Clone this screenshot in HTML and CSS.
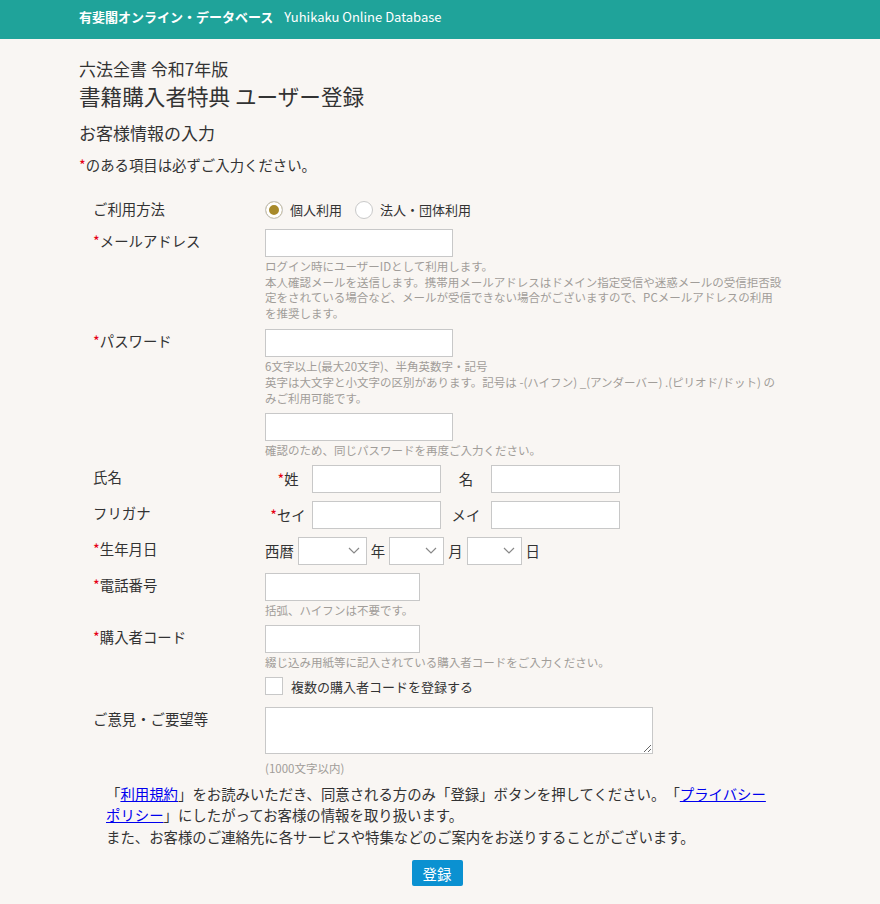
FILE: index.html
```html
<!DOCTYPE html>
<html lang="ja">
<head>
<meta charset="utf-8">
<title>書籍購入者特典 ユーザー登録</title>
<link rel="stylesheet" href="styles.css">
</head>
<body>
<header class="topbar">
  <div class="topbar-inner">
    <span class="brand">有斐閣オンライン・データベース</span>
    <span class="brand-en">Yuhikaku Online Database</span>
  </div>
</header>
<main class="page">
  <p class="subtitle">六法全書 令和7年版</p>
  <h1 class="title">書籍購入者特典 ユーザー登録</h1>
  <h2 class="section">お客様情報の入力</h2>
  <p class="note"><span class="req">*</span>のある項目は必ずご入力ください。</p>

  <form class="form">
    <div class="row row-first">
      <div class="label">ご利用方法</div>
      <div class="radios">
        <label class="opt"><input class="radio" type="radio" name="usage" checked><span>個人利用</span></label>
        <label class="opt opt-2"><input class="radio" type="radio" name="usage"><span>法人・団体利用</span></label>
      </div>
    </div>

    <div class="row row-email">
      <div class="label"><span class="req">*</span>メールアドレス</div>
      <div class="field">
        <input class="text w-188" type="text">
        <p class="help">ログイン時にユーザーIDとして利用します。<br>本人確認メールを送信します。携帯用メールアドレスはドメイン指定受信や迷惑メールの受信拒否設<br>定をされている場合など、メールが受信できない場合がございますので、PCメールアドレスの利用<br>を推奨します。</p>
      </div>
    </div>

    <div class="row row-pass">
      <div class="label"><span class="req">*</span>パスワード</div>
      <div class="field">
        <input class="text w-188" type="password">
        <p class="help">6文字以上(最大20文字)、半角英数字・記号<br>英字は大文字と小文字の区別があります。記号は -(ハイフン) _(アンダーバー) .(ピリオド/ドット) の<br>みご利用可能です。</p>
        <input class="text w-188 confirm" type="password">
        <p class="help">確認のため、同じパスワードを再度ご入力ください。</p>
      </div>
    </div>

    <div class="row row-name">
      <div class="label">氏名</div>
      <div class="pair">
        <span class="sub sub-1"><span class="req">*</span>姓</span>
        <input class="text w-129" type="text">
        <span class="sub sub-2">名</span>
        <input class="text w-129" type="text">
      </div>
    </div>

    <div class="row row-kana">
      <div class="label">フリガナ</div>
      <div class="pair">
        <span class="sub sub-1"><span class="req">*</span>セイ</span>
        <input class="text w-129" type="text">
        <span class="sub sub-2">メイ</span>
        <input class="text w-129" type="text">
      </div>
    </div>

    <div class="row row-birth">
      <div class="label"><span class="req">*</span>生年月日</div>
      <div class="birth">
        <span>西暦</span>
        <select class="sel sel-year"><option></option></select>
        <span>年</span>
        <select class="sel sel-md"><option></option></select>
        <span>月</span>
        <select class="sel sel-md"><option></option></select>
        <span>日</span>
      </div>
    </div>

    <div class="row row-tel">
      <div class="label"><span class="req">*</span>電話番号</div>
      <div class="field">
        <input class="text w-155" type="text">
        <p class="help">括弧、ハイフンは不要です。</p>
      </div>
    </div>

    <div class="row row-code">
      <div class="label"><span class="req">*</span>購入者コード</div>
      <div class="field">
        <input class="text w-155" type="text">
        <p class="help">綴じ込み用紙等に記入されている購入者コードをご入力ください。</p>
        <label class="check-row"><input class="check" type="checkbox"><span>複数の購入者コードを登録する</span></label>
      </div>
    </div>

    <div class="row row-opinion">
      <div class="label">ご意見・ご要望等</div>
      <div class="field">
        <textarea class="area"></textarea>
        <p class="help help-area">(1000文字以内)</p>
      </div>
    </div>

    <p class="consent">「<a href="#">利用規約</a>」をお読みいただき、同意される方のみ「登録」ボタンを押してください。「<a href="#">プライバシー<br>ポリシー</a>」にしたがってお客様の情報を取り扱います。<br>また、お客様のご連絡先に各サービスや特集などのご案内をお送りすることがございます。</p>

    <div class="actions">
      <button class="submit" type="button">登録</button>
    </div>
  </form>
</main>
</body>
</html>
```

FILE: styles.css
```css
* {
  box-sizing: border-box;
}

body {
  margin: 0;
  background: #f9f6f3;
  color: #333;
  font-family: "Noto Sans CJK JP", "Noto Sans", sans-serif;
  font-size: 14.4px;
  text-spacing-trim: space-all;
}

.topbar {
  background: #1fa39a;
  height: 39px;
}

.topbar-inner {
  width: 722px;
  margin: 0 auto;
  padding-top: 7px;
  display: flex;
  gap: 11px;
  color: #fff;
  font-size: 13px;
  line-height: 20px;
}

.brand {
  font-weight: 700;
}

.page {
  width: 722px;
  margin: 0 auto;
  padding-top: 17px;
  padding-bottom: 6px;
}

.subtitle {
  margin: 0;
  font-size: 17px;
  line-height: 25px;
}

.title {
  margin: 0;
  font-size: 21.6px;
  line-height: 30px;
  font-weight: 400;
}

.section {
  margin: 10px 0 0;
  font-size: 17px;
  line-height: 24px;
  font-weight: 400;
}

.note {
  margin: 10px 0 0;
  line-height: 20px;
}

.req {
  color: #e60012;
}

.form {
  padding-left: 14px;
  margin: 22px 0 0;
}

.row {
  display: flex;
  align-items: flex-start;
  margin-top: 8px;
}

.row-first {
  margin-top: 0;
}

.row-email {
  margin-top: 9px;
}

.row-pass {
  margin-top: 8px;
}

.row-name {
  margin-top: 6px;
}

.row-code {
  margin-top: 7px;
}

.row-opinion {
  margin-top: 11px;
}

.label {
  width: 172px;
  flex: none;
  line-height: 23px;
}

.radios {
  display: flex;
  align-items: center;
  height: 23px;
  padding-top: 2px;
}

.opt {
  display: flex;
  align-items: center;
  font-size: 13px;
}

.opt-2 {
  margin-left: 13px;
}

.radio {
  appearance: none;
  -webkit-appearance: none;
  width: 18px;
  height: 18px;
  margin: 0 7px 0 0;
  border: 1px solid #c9c9c9;
  border-radius: 50%;
  background: #fff;
}

.radio:checked {
  background: #a88a2a;
  box-shadow: inset 0 0 0 3px #fff;
}

.field {
  display: flex;
  flex-direction: column;
  align-items: flex-start;
}

.text {
  height: 28px;
  border: 1px solid #c8c8c8;
  background: #fff;
  padding: 0 6px;
  font: inherit;
  margin: 0;
}

.w-188 {
  width: 188px;
}

.w-155 {
  width: 155px;
}

.w-129 {
  width: 129px;
}

.confirm {
  margin-top: 7px;
}

.help {
  margin: 2px 0 0;
  font-size: 11.5px;
  line-height: 15.6px;
  color: #a19d99;
  white-space: nowrap;
}

.pair {
  display: flex;
  align-items: center;
}

.sub {
  text-align: center;
}

.sub-1 {
  width: 46px;
  margin-right: 1px;
}

.sub-2 {
  width: 50px;
}

.birth {
  display: flex;
  align-items: center;
  gap: 4px;
}

.sel {
  appearance: none;
  -webkit-appearance: none;
  height: 28px;
  margin: 0;
  border: 1px solid #c8c8c8;
  border-radius: 0;
  background: #fff url("data:image/svg+xml,%3Csvg xmlns='http://www.w3.org/2000/svg' width='12' height='7' viewBox='0 0 12 7'%3E%3Cpath d='M1 1l5 5 5-5' fill='none' stroke='%23888' stroke-width='1.2'/%3E%3C/svg%3E") no-repeat right 6px center;
  font: inherit;
}

.sel-year {
  width: 69px;
}

.sel-md {
  width: 55px;
}

.check-row {
  display: flex;
  align-items: center;
  margin-top: 6px;
  font-size: 13px;
}

.check {
  appearance: none;
  -webkit-appearance: none;
  width: 18px;
  height: 18px;
  margin: 0 8px 0 0;
  border: 1px solid #c8c8c8;
  background: #fff;
}

.area {
  display: block;
  width: 388px;
  height: 47px;
  margin: 0;
  border: 1px solid #c8c8c8;
  background: #fff;
  font: inherit;
}

.help-area {
  margin-top: 7px;
}

.consent {
  margin: 6px 0 0 13px;
  width: 670px;
  line-height: 21.6px;
}

.consent a {
  color: #0000ee;
}

.actions {
  display: flex;
  justify-content: center;
  margin-top: 13px;
  padding-right: 20px;
}

.submit {
  width: 51px;
  height: 26px;
  border: none;
  border-radius: 2px;
  background: #0b91d1;
  color: #fff;
  font: inherit;
  padding: 0;
}
```
